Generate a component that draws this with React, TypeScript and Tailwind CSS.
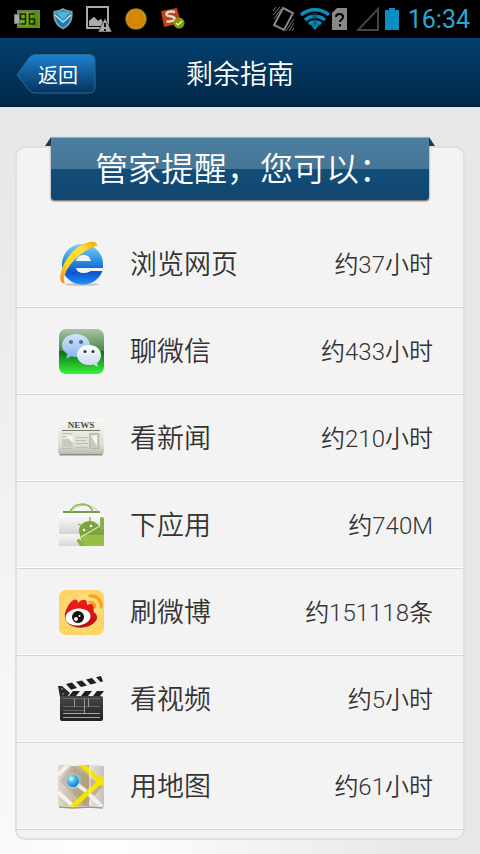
import type { ReactNode } from "react";

function BrowserIcon() {
  return (
    <svg viewBox="0 0 46 46" className="size-full" aria-hidden="true">
      <defs>
        <linearGradient id="ieBlue" x1="0" y1="0" x2="0" y2="1">
          <stop offset="0" stopColor="#7fd0f8" />
          <stop offset=".4" stopColor="#2d92e6" />
          <stop offset=".7" stopColor="#0b55d0" />
          <stop offset="1" stopColor="#1e90f5" />
        </linearGradient>
        <linearGradient id="ieGold" x1="1" y1="0" x2="0" y2="1">
          <stop offset="0" stopColor="#f2a400" />
          <stop offset=".3" stopColor="#ffe13a" />
          <stop offset=".7" stopColor="#ffd21c" />
          <stop offset="1" stopColor="#f08a1c" />
        </linearGradient>
      </defs>
      <ellipse cx="24" cy="43.500" rx="17" ry="1.500" fill="#c4c4c4" />
      <path
        fillRule="evenodd"
        fill="url(#ieBlue)"
        d="M24.500 3C36 3 45 12 45 23v4H18c.5 3 3.500 5 8 5 3 0 5-1 6.500-2h12C41 38.500 34 43.500 25 43.500 13 43.500 4 35 4 23.500 4 12 13 3 24.500 3ZM18 20h15C32 15.500 29 14 25.500 14S19 16 18 20Z"
      />
      <path
        fill="url(#ieGold)"
        d="M38.500 5.500C38 5 36 5 33 7 22 12 11 23 7.500 32 5.500 38 5 41 8 42c-4 1.500-6.500-2-5.500-8C4.500 20 16 6 28 2c7-2.500 12.500-1 10.500 3.500Z"
      />
    </svg>
  );
}

function ChatIcon() {
  return (
    <svg viewBox="0 0 46 46" className="size-full" aria-hidden="true">
      <defs>
        <linearGradient id="chatTop" x1="0" y1="0" x2="0" y2="1">
          <stop offset="0" stopColor="#a9c5a7" />
          <stop offset=".48" stopColor="#498747" />
          <stop offset=".5" stopColor="#08720c" />
          <stop offset="1" stopColor="#37f33e" />
        </linearGradient>
        <linearGradient id="chatBlue" x1="0" y1="0" x2="0" y2="1">
          <stop offset="0" stopColor="#d3e4fb" />
          <stop offset="1" stopColor="#84b2f1" />
        </linearGradient>
        <linearGradient id="chatWhite" x1="0" y1="0" x2="0" y2="1">
          <stop offset="0" stopColor="#ffffff" />
          <stop offset="1" stopColor="#c8d6ef" />
        </linearGradient>
      </defs>
      <rect x="1" y="1" width="45" height="45" rx="7" fill="url(#chatTop)" />
      <path
        fill="url(#chatBlue)"
        d="M18 6c8 0 14 5 14 11.500S26 29 18 29c-2 0-3.500-.2-5-.8L8 31l1.500-5C6 24 4 21 4 17.500 4 11 10 6 18 6Z"
      />
      <path
        fill="url(#chatWhite)"
        d="M31 17c7 0 12 4.500 12 10 0 3.500-1.500 6-4 8l1 4-4.500-2.500c-1.500.4-3 .5-4.500.5-7 0-12-4.500-12-10s5-10 12-10Z"
      />
      <circle cx="13" cy="14" r="2" fill="#56697a" />
      <circle cx="23" cy="14" r="2" fill="#56697a" />
      <circle cx="27" cy="23.500" r="1.500" fill="#333" />
      <circle cx="35" cy="23.500" r="1.500" fill="#333" />
    </svg>
  );
}

function NewsIcon() {
  return (
    <svg viewBox="0 0 46 46" className="size-full" aria-hidden="true">
      <defs>
        <linearGradient id="paper" x1="0" y1="0" x2="0" y2="1">
          <stop offset="0" stopColor="#f8f8f3" />
          <stop offset=".75" stopColor="#dcdcd0" />
          <stop offset="1" stopColor="#bcbcae" />
        </linearGradient>
      </defs>
      <path d="M1 38h44l-1 2.500H2Z" fill="#8d8c84" />
      <path d="M1 4h44l1 32q0 3-3 3H3q-3 0-3-3Z" fill="url(#paper)" />
      <text
        x="23"
        y="13"
        textAnchor="middle"
        fontFamily="Liberation Serif, serif"
        fontWeight="bold"
        fontSize="9"
        fill="#4a4a48"
      >
        NEWS
      </text>
      <path d="M4 15.500h38" stroke="#77776f" />
      <path d="M4 18.500h10M4 21.500h11M18 22.500h12M18 25.500h10M4 30.500h11M4 33.500h11M18 28.500h12M18 32.500h12" stroke="#bcbcb0" />
      <path d="M4 24h11v8H4ZM31 18h10v16H31Z" fill="#c9c9be" />
      <path d="m8 21 7 7v-7ZM33 21l6 10V20Z" fill="#f5f5ef" />
      <path d="M32 18.500h9v15h-9Z" fill="none" stroke="#b7b7aa" />
    </svg>
  );
}

function StoreIcon() {
  return (
    <svg viewBox="0 0 46 46" className="size-full" aria-hidden="true">
      <defs>
        <linearGradient id="bag" x1="0" y1="0" x2="0" y2="1">
          <stop offset="0" stopColor="#ffffff" />
          <stop offset=".64" stopColor="#d4d4d4" />
          <stop offset=".65" stopColor="#f6f6f6" />
          <stop offset="1" stopColor="#d6d6d6" />
        </linearGradient>
        <clipPath id="bagClip">
          <path d="M1 10h45v34H1Z" />
        </clipPath>
      </defs>
      <path d="M5 9h37v2H5Z" fill="#719c4b" />
      <path d="M14 10c2-9 22-9 26 0" fill="none" stroke="#a9cf7a" />
      <path d="M12 10c4-10 19-11 23 0" fill="none" stroke="#87b34d" strokeWidth="1.500" />
      <path d="M1 11h45v33H1Z" fill="url(#bag)" />
      <g clipPath="url(#bagClip)">
        <path d="m22 34-1-5c0-6 5-10 11-10 4 0 7 2 9 5l6 1v20H26Z" fill="#7da43c" />
        <path d="M22 33h24v12H27Z" fill="#94c046" />
        <path d="m21 39 4 6M44 17v9" stroke="#86b442" strokeWidth="4" strokeLinecap="round" />
        <path d="m23 35 19-11" stroke="#d9e5c5" strokeWidth="1.200" />
        <path d="m32 20 0-5M25 24l-5-2" stroke="#7fae3c" strokeWidth="1.200" />
        <circle cx="26" cy="28" r="1.200" fill="#fff" />
        <circle cx="33" cy="24" r="1.200" fill="#fff" />
      </g>
    </svg>
  );
}

function WeiboIcon() {
  return (
    <svg viewBox="0 0 46 46" className="size-full" aria-hidden="true">
      <defs>
        <radialGradient id="weiboBg">
          <stop offset="0" stopColor="#fff1ad" />
          <stop offset="1" stopColor="#ffd364" />
        </radialGradient>
        <linearGradient id="weiboRed" x1="0" y1="0" x2="0" y2="1">
          <stop offset="0" stopColor="#f51c1c" />
          <stop offset="1" stopColor="#bd0d0d" />
        </linearGradient>
      </defs>
      <rect x="1" y="1" width="45" height="45" rx="7" fill="url(#weiboBg)" />
      <path
        d="M23 25 8 46M23 25v21M23 25l8 21M23 25l16 21M23 25l22 16M23 25l23 8M23 25 1 41M23 25 1 33M23 25H1M23 25 1 16M23 25 1 8M23 25 10 1M23 25 19 1"
        stroke="#fcc24b"
        opacity=".35"
      />
      <path
        fill="url(#weiboRed)"
        d="M7 29c-1-5 2-11 5-15 3-4 8-5 8 0 2-2 4-4 7-3 2 0 2 3 2 5 4-2 7-1 7 2 0 2-1 3 0 5 5 4 4 9-3 13-9 5-24 3-26-7Z"
      />
      <ellipse cx="20" cy="28" rx="12.500" ry="8.500" fill="#fff" transform="rotate(-7 20 28)" />
      <circle cx="20" cy="28" r="6" fill="#111" />
      <circle cx="18" cy="30" r="2" fill="#fff" />
      <circle cx="21.500" cy="27" r="1" fill="#fff" />
      <path d="M32 7c7-1 12 5 11 11" fill="none" stroke="#f8a31b" strokeWidth="3" strokeLinecap="round" />
      <path d="M32 13c3 0 5 2 5 5" fill="none" stroke="#f8a31b" strokeWidth="3" strokeLinecap="round" />
    </svg>
  );
}

function VideoIcon() {
  return (
    <svg viewBox="0 0 46 46" className="size-full" aria-hidden="true">
      <defs>
        <linearGradient id="slate" x1="0" y1="0" x2="0" y2="1">
          <stop offset="0" stopColor="#474747" />
          <stop offset="1" stopColor="#202022" />
        </linearGradient>
      </defs>
      <path d="M2 9.500 43 0l2 5.500L8 15Z" fill="#f3f3f3" />
      <path d="m8 8 6-1.400 5 5.500-6 1.600ZM18 5.800l6-1.400 5 5.200-6 1.500ZM28 3.500l6-1.400 4.500 5-6 1.500ZM38 1.200 43 0l2 5.500-2.500.6Z" fill="#202020" />
      <path d="M3 15h43v5H3Z" fill="#f3f3f3" />
      <path d="m15 15-4 5h7l4-5ZM27 15l-4 5h7l4-5ZM39 15l-4 5h7l4-5Z" fill="#202020" />
      <path d="M0 10h4l8 7-3 4H2Z" fill="#29292b" />
      <circle cx="4" cy="13" r=".8" fill="#aaa" />
      <circle cx="5" cy="18" r=".8" fill="#aaa" />
      <rect x="2" y="20" width="43" height="25" rx="2" fill="url(#slate)" />
      <path d="M5 22.500h37M5 34.500h21M5 30.500h37" stroke="#666" />
      <path d="M16.500 23v8M26.500 23v14M30.500 23v8" stroke="#999" />
      <path d="M5 37.500h37M5 41.500h37" stroke="#a5a5a5" />
    </svg>
  );
}

function MapIcon() {
  return (
    <svg viewBox="0 0 46 46" className="size-full" aria-hidden="true">
      <defs>
        <linearGradient id="fold">
          <stop offset="0" stopColor="#d7d1c3" />
          <stop offset=".32" stopColor="#bda98a" />
          <stop offset=".34" stopColor="#cbbda4" />
          <stop offset=".67" stopColor="#b7a88d" />
          <stop offset=".69" stopColor="#e4e0d5" />
          <stop offset="1" stopColor="#c7c3b8" />
        </linearGradient>
        <radialGradient id="pin" cx=".35" cy=".3" r=".7">
          <stop offset="0" stopColor="#e2ffff" />
          <stop offset=".45" stopColor="#4cb9ef" />
          <stop offset="1" stopColor="#1a7cc9" />
        </radialGradient>
        <clipPath id="mapClip">
          <path d="m0 2 15 1 16-1 15 1v41l-15-1-16 1-15-1Z" />
        </clipPath>
      </defs>
      <path d="m1 44 14 1 16-1 14 1" stroke="#9b998f" strokeWidth="1.500" fill="none" />
      <g clipPath="url(#mapClip)">
        <path d="M0 0h46v46H0Z" fill="url(#fold)" />
        <path d="M1 19 15 3l30 20-18 20L1 17" fill="#ae9978" opacity=".6" />
        <path d="M0 12 12 0M12 16l17 13M0 29l16 15M30 30l14 14" stroke="#efefed" strokeWidth="4" />
        <path d="M22 0 46 22M46 15 13 45" stroke="#f5e400" strokeWidth="5" />
        <path d="m0 2 15 1v41L0 43Z" fill="#fff" opacity=".2" />
        <path d="M31 2h2v42h-2Z" fill="#fff" opacity=".35" />
      </g>
      <circle cx="15" cy="18" r="8" fill="#8cdaf0" opacity=".5" />
      <circle cx="15" cy="18" r="6" fill="url(#pin)" />
    </svg>
  );
}

const rows: { label: string; value: string; icon: ReactNode }[] = [
  { label: "浏览网页", value: "约37小时", icon: <BrowserIcon /> },
  { label: "聊微信", value: "约433小时", icon: <ChatIcon /> },
  { label: "看新闻", value: "约210小时", icon: <NewsIcon /> },
  { label: "下应用", value: "约740M", icon: <StoreIcon /> },
  { label: "刷微博", value: "约151118条", icon: <WeiboIcon /> },
  { label: "看视频", value: "约5小时", icon: <VideoIcon /> },
  { label: "用地图", value: "约61小时", icon: <MapIcon /> },
];

function StatusBar() {
  return (
    <div className="flex h-[38px] items-center justify-between bg-black pr-[10px] pl-[14px]">
      <div className="flex items-center gap-[13px]">
        <svg width="26" height="18" viewBox="0 0 26 18" role="img" aria-label="96%">
          <path d="M3 0h23v18H3v-4H0V4h3Z" fill="#777" />
          <path d="M1 5h4V1h3v16H5v-4H1Z" fill="#aaa" />
          <path d="M5 1h20v16H5Z" fill="#5c9108" />
          <path d="M6 2h12v14H6Z" fill="#74a91d" />
          <path d="M11.500 9h-5V4h5v10h-5M20.500 4h-5v10h5V9h-5" fill="none" stroke="#182400" strokeWidth="1.500" />
        </svg>
        <svg width="20" height="22" viewBox="0 0 20 22" aria-hidden="true">
          <path d="M10 0c3 2 6 2.500 9.500 3 .8 8-1 14-9.500 18.500C1.500 17-.3 11 .5 3 4 2.500 7 2 10 0Z" fill="#8799a2" />
          <path d="M10 2c2.500 1.500 5 2 7.500 2.500.5 6.500-1 11-7.500 15C3.500 15.500 2 11 2.500 4.500 5 4 7.500 3.500 10 2Z" fill="#137eb8" />
          <path d="M3 5c4-2 10-2 14 0l-7 7Z" fill="#49b5d4" />
          <path d="m2 7 8 7 8-7" fill="none" stroke="#d0e1e7" strokeWidth="1.500" />
        </svg>
        <svg width="26" height="26" viewBox="0 0 26 26" aria-hidden="true">
          <path d="M1 1h21v21H1Z" fill="none" stroke="#aaa" strokeWidth="2" />
          <path d="m3 20V15l5-4 4 4 3-2 2 3v4Z" fill="#aaa" />
          <path d="m19 12 7 14H12Z" fill="#aaa" stroke="#000" strokeWidth=".5" />
          <path d="M19 17v4M19 23v2" stroke="#111" strokeWidth="2" />
          <path d="M3 20v-5l5-4 4 4 3-2 1 2-3 5Z" fill="#aaa" />
        </svg>
        <svg width="22" height="22" viewBox="0 0 22 22" aria-hidden="true">
          <defs>
            <radialGradient id="sun">
              <stop offset="0" stopColor="#d98a0a" />
              <stop offset=".7" stopColor="#d48202" />
              <stop offset=".85" stopColor="#c8a020" />
              <stop offset="1" stopColor="#4a3800" />
            </radialGradient>
          </defs>
          <circle cx="11" cy="11" r="11" fill="url(#sun)" />
        </svg>
        <svg width="25" height="24" viewBox="0 0 25 24" aria-hidden="true">
          <path d="m1 4 16-3 4 15-17 4Z" fill="#c64111" />
          <path d="M15 5c-6-1-9 0-8.500 2.500s7 1 8 3.500-4 4-8 3.500" fill="none" stroke="#ddd" strokeWidth="2.500" />
          <circle cx="19" cy="16" r="5.500" fill="#849a06" />
          <path d="m16 16 2 2 4-4" stroke="#e4e9c9" strokeWidth="1.500" fill="none" />
        </svg>
      </div>
      <div className="flex items-center">
        <svg width="22" height="26" viewBox="0 0 22 26" className="mr-[6px]" aria-hidden="true">
          <path d="m11 2 10 5-9 17-10-5Z" fill="none" stroke="#888" strokeWidth="2" />
          <path d="m3 19 9 5M1 5l3-4M1 9l7-8M2 13l7-10M14 25l8-12M17 25l5-8M20 25l2-3" stroke="#777" />
        </svg>
        <svg width="30" height="22" viewBox="0 0 30 22" className="mr-[2px]" aria-hidden="true">
          <path d="M1 7c8-7 20-7 28 0M5 12c6-5 14-5 20 0M9 16c4-3 8-3 12 0" fill="none" stroke="#078fc1" strokeWidth="3.500" />
          <path d="m15 22-4-5q4-3 8 0Z" fill="#078fc1" />
          <path d="m12 5 6 0-2 14h-2Z" fill="#003b57" opacity=".5" />
        </svg>
        <svg width="15" height="22" viewBox="0 0 15 22" className="mr-[9px]" aria-hidden="true">
          <path d="M5 0h10v22H0V5Z" fill="#888" />
          <path d="M4 9c0-4 7-4 7 0 0 3-3 2-3 5M8 16v2.500" fill="none" stroke="#000" strokeWidth="2" />
        </svg>
        <svg width="23" height="24" viewBox="0 0 23 24" className="mr-[6px]" aria-hidden="true">
          <path d="M22 2v21H2Z" fill="none" stroke="#444" strokeWidth="2" />
        </svg>
        <svg width="14" height="22" viewBox="0 0 14 22" className="mr-[9px]" aria-hidden="true">
          <path d="M4 0h6v2h4v20H0V2h4Z" fill="#078fc1" />
        </svg>
        <span className="pt-[2px] font-[Roboto,sans-serif] text-[25px] leading-[36px] text-[#2ba6d3]">16:34</span>
      </div>
    </div>
  );
}

export default function App() {
  return (
    <div className="flex min-h-screen flex-col bg-[#e7e7e7] bg-[radial-gradient(ellipse_at_20%_100%,#ffffff_0%,#e7e7e7_60%)] font-[Roboto,'Noto_Sans_CJK_SC',sans-serif] text-[#333]">
      <StatusBar />
      <header className="grid h-[69px] grid-cols-[80px_1fr_80px] items-center border-b border-[#001f3a] bg-linear-to-b from-[#04406e] to-[#022848] px-4 pt-1">
        <button type="button" className="relative h-10 w-20 pt-1 text-center text-[20px] leading-[36px] text-white">
          <svg viewBox="0 0 80 40" className="absolute inset-0 size-full" aria-hidden="true">
            <defs>
              <linearGradient id="back" x1="0" y1="0" x2="0" y2="1">
                <stop offset="0" stopColor="#1d82d3" />
                <stop offset="1" stopColor="#06325c" />
              </linearGradient>
            </defs>
            <path
              d="M1 21 13 4q3-3.500 6-3.500h54q6 0 6 6V33q0 6-6 6H19q-4 0-6-3Z"
              fill="url(#back)"
              stroke="#2a6f93"
            />
          </svg>
          <span className="relative pl-1">返回</span>
        </button>
        <h1 className="pt-[2px] text-center text-[27px] leading-[40px] font-[350] text-white">剩余指南</h1>
      </header>

      <main className="px-[15px] pt-[39px] pb-[15px]">
        <section className="rounded-[10px] border-2 border-[#e0e0e0] bg-[#f3f3f3] pb-2">
          <div className="relative mx-[34px] -mt-[11px] mb-[21px]">
            <svg width="6" height="9" viewBox="0 0 6 9" className="absolute top-0 -left-[6px]" aria-hidden="true">
              <path d="M6 0v9H0Z" fill="#183e57" />
            </svg>
            <svg width="6" height="9" viewBox="0 0 6 9" className="absolute top-0 -right-[6px]" aria-hidden="true">
              <path d="M0 0v9h6Z" fill="#183e57" />
            </svg>
            <h2 className="h-[63px] rounded-b-[3px] border-t border-[#8fb0c2] bg-[linear-gradient(#4b7fa2_0%,#467595_50%,#124e7b_50%,#11466f_100%)] pl-[44px] text-[33px] leading-[63px] font-[350] whitespace-nowrap text-white shadow-[0_1px_2px_#555]">
              管家提醒，您可以：
            </h2>
          </div>
          <ul>
            {rows.map((row) => (
              <li
                key={row.label}
                className="flex h-[87px] items-center border-b border-[#d3d3d3] pr-[30px] pl-[41px] shadow-[inset_0_-1px_0_#fff]"
              >
                <span className="size-[46px] shrink-0">{row.icon}</span>
                <span className="ml-[26px] flex-1 pt-[2px] text-[27px] leading-[40px] font-[350]">{row.label}</span>
                <span className="pt-[2px] text-[24px] leading-[36px] font-[350]">{row.value}</span>
              </li>
            ))}
          </ul>
        </section>
      </main>
    </div>
  );
}
